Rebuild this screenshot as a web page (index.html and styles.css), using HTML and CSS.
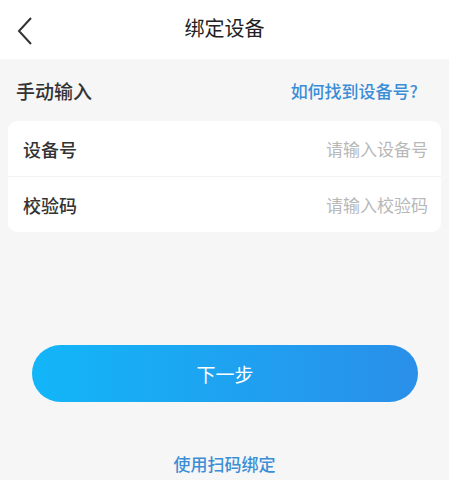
FILE: index.html
```html
<!DOCTYPE html>
<html lang="zh">
<head>
<meta charset="utf-8">
<link rel="stylesheet" href="styles.css">
</head>
<body>
<div class="page">
  <header class="nav">
    <svg class="back" width="20" height="30" viewBox="0 0 20 30"><polyline points="14,2 2,15 14,28" fill="none" stroke="#333" stroke-width="2"/></svg>
    <div class="title">绑定设备</div>
  </header>
  <div class="section-head">
    <span class="section-title">手动输入</span>
    <span class="link">如何找到设备号?</span>
  </div>
  <div class="card">
    <div class="row">
      <span class="label">设备号</span>
      <span class="placeholder">请输入设备号</span>
    </div>
    <div class="row">
      <span class="label">校验码</span>
      <span class="placeholder">请输入校验码</span>
    </div>
  </div>
  <div class="btn-wrap">
    <div class="btn">下一步</div>
  </div>
  <div class="scan">使用扫码绑定</div>
</div>
</body>
</html>
```
FILE: styles.css
```css
html, body {
  margin: 0;
  padding: 0;
  background: #f6f6f6;
}
body {
  font-family: "Noto Sans CJK SC", "Noto Sans", sans-serif;
  width: 449px;
  height: 480px;
  overflow: hidden;
}
.page {
  display: flex;
  flex-direction: column;
}
.nav {
  height: 59px;
  background: #fff;
  display: flex;
  align-items: center;
  justify-content: center;
  position: relative;
}
.back {
  position: absolute;
  left: 17px;
  top: 16px;
}
.title {
  font-size: 20px;
  color: #222;
  margin-top: -4px;
}
.section-head {
  height: 62px;
  display: flex;
  align-items: center;
  justify-content: space-between;
  padding: 0 31px 0 16px;
}
.section-title {
  font-size: 19px;
  font-weight: 500;
  color: #333;
}
.link {
  font-size: 17px;
  font-weight: 500;
  color: #3b8ed6;
}
.card {
  margin: 0 8px;
  background: #fff;
  border-radius: 9px;
  display: flex;
  flex-direction: column;
}
.row {
  height: 55px;
  display: flex;
  align-items: center;
  justify-content: space-between;
  padding: 0 13px 0 15px;
}
.row + .row {
  border-top: 1px solid #f2f2f2;
}
.label {
  font-size: 18px;
  font-weight: 500;
  color: #333;
}
.placeholder {
  font-size: 17px;
  color: #b8b8b8;
}
.btn-wrap {
  padding: 113px 31px 0 32px;
}
.btn {
  height: 57px;
  border-radius: 29px;
  background: linear-gradient(90deg, #12b6f8, #2a8fe9);
  color: #fff;
  font-size: 19px;
  display: flex;
  align-items: center;
  justify-content: center;
}
.scan {
  margin-top: 49px;
  text-align: center;
  font-size: 17px;
  font-weight: 500;
  color: #3b8ed6;
}
```
